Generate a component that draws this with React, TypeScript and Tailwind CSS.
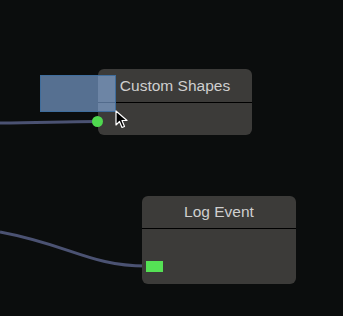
import React from 'react';

type NodeProps = {
  title: string;
  x: number;
  y: number;
  w: number;
  h: number;
  headerH: number;
};

function Node({ title, x, y, w, h, headerH }: NodeProps) {
  return (
    <div
      className="absolute flex flex-col rounded-[6px] bg-[#3c3b39] overflow-hidden"
      style={{ left: x, top: y, width: w, height: h }}
    >
      <div
        className="flex items-center justify-center border-b border-black text-[15.5px] text-[#cfcfcf]"
        style={{ height: headerH }}
      >
        {title}
      </div>
      <div className="flex-1" />
    </div>
  );
}

export default function App() {
  return (
    <div
      className="relative w-[343px] h-[316px] overflow-hidden bg-[#0b0d0d]"
      style={{ fontFamily: '"Liberation Sans", Arial, sans-serif' }}
    >
      {/* edges */}
      <svg className="absolute inset-0" width="343" height="316">
        <path d="M0 123 C 40 123, 60 121.5, 97 121.5" stroke="#4b5272" strokeWidth="3" fill="none" />
        <path d="M0 232 C 70 245, 90 266, 146 266" stroke="#4b5272" strokeWidth="3" fill="none" />
      </svg>

      <Node title="Custom Shapes" x={98} y={69} w={154} h={66} headerH={34} />
      <Node title="Log Event" x={142} y={196} w={154} h={88} headerH={33} />

      {/* ports */}
      <div className="absolute left-[92px] top-[116px] w-[11px] h-[11px] rounded-full bg-[#4fd84f]" />
      <div className="absolute left-[146px] top-[261px] w-[17px] h-[11px] bg-[#55e155]" />

      {/* selection box */}
      <div className="absolute left-[40px] top-[75px] w-[76px] h-[37px] border border-[#3f6d9c] bg-[rgba(150,195,255,0.55)]" />

      {/* cursor */}
      <svg className="absolute left-[115px] top-[110px]" width="14" height="20" viewBox="0 0 14 20">
        <path d="M1 1 L1 15 L4.5 11.5 L7 17.5 L9.5 16.5 L7 10.5 L12 10.5 Z" fill="#000" stroke="#fff" strokeWidth="1.2" strokeLinejoin="round" />
      </svg>
    </div>
  );
}
